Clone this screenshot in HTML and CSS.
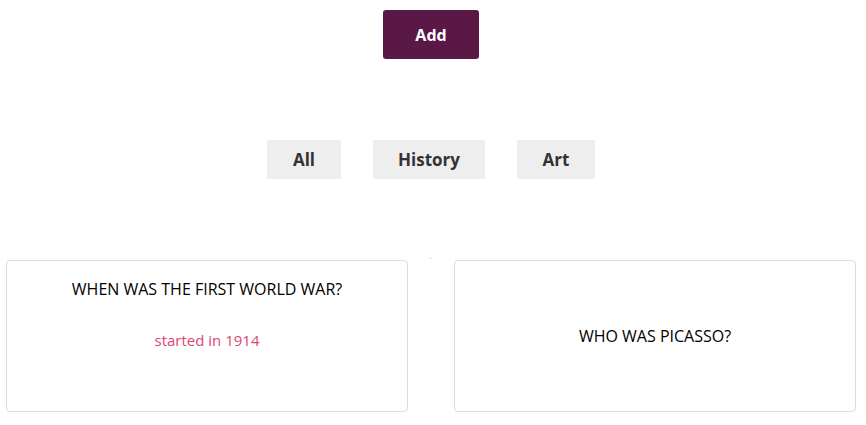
FILE: index.html
```html
<!DOCTYPE html>
<html>
<head>
<meta charset="utf-8">
<link rel="stylesheet" href="styles.css">
</head>
<body>
<div class="top">
  <button class="add">Add</button>
</div>
<div class="filters">
  <button class="filter f-all">All</button>
  <button class="filter f-history">History</button>
  <button class="filter f-art">Art</button>
</div>
<div class="cards">
  <div class="card card-open">
    <div class="question">WHEN WAS THE FIRST WORLD WAR?</div>
    <div class="answer">started in 1914</div>
  </div>
  <span class="dot"></span>
  <div class="card card-closed">
    <div class="question">WHO WAS PICASSO?</div>
  </div>
</div>
</body>
</html>
```

FILE: styles.css
```css
* { box-sizing: border-box; }
html, body { margin: 0; padding: 0; background: #fff; }
body {
  font-family: "Open Sans", "Noto Sans", sans-serif;
  width: 866px;
  height: 425px;
  overflow: hidden;
}
.top {
  display: flex;
  justify-content: center;
  padding-top: 10px;
  padding-right: 4px;
}
.add {
  width: 96px;
  height: 49px;
  background: #5a1847;
  color: #fff;
  border: none;
  border-radius: 3px;
  font-family: inherit;
  font-weight: 700;
  font-size: 16px;
  padding: 0;
}
.filters {
  display: flex;
  justify-content: center;
  gap: 32px;
  margin-top: 81px;
  padding-right: 4px;
}
.filter {
  height: 39px;
  background: #eeeeee;
  color: #333;
  border: none;
  font-family: inherit;
  font-weight: 700;
  font-size: 17px;
  padding: 0;
}
.f-all { width: 74px; }
.f-history { width: 112px; }
.f-art { width: 78px; }
.cards {
  display: grid;
  grid-template-columns: 402px 46px 402px;
  margin: 81px 0 0 6px;
}
.dot {
  width: 1px;
  height: 1px;
  background: #bbb;
  margin: -2px 0 0 22px;
}
.card {
  height: 152px;
  border: 1px solid #dcdcdc;
  border-radius: 4px;
  text-align: center;
}
.card-open {
  padding-top: 17px;
}
.card-closed {
  display: flex;
  align-items: center;
  justify-content: center;
}
.question {
  font-size: 16px;
  font-weight: 500;
  color: #000;
}
.answer {
  margin-top: 30px;
  font-size: 15px;
  color: #e0466f;
}
```
